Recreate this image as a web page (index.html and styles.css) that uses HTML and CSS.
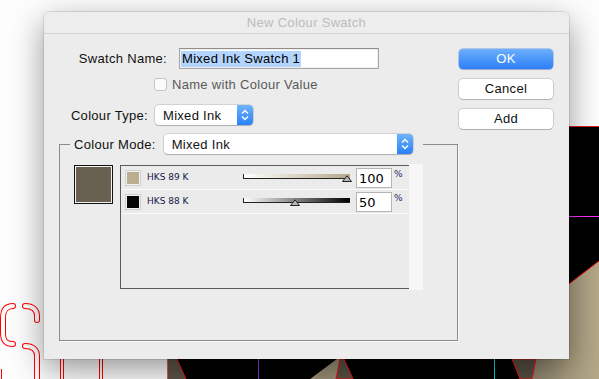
FILE: index.html
```html
<!DOCTYPE html>
<html>
<head>
<meta charset="utf-8">
<title>New Colour Swatch</title>
<link rel="stylesheet" href="styles.css">
</head>
<body>
<div class="desk">
  <svg class="canvas" width="599" height="379" viewBox="0 0 599 379">
    <rect x="0" y="0" width="599" height="379" fill="#fdfdfd"/>
    <rect x="167" y="126" width="432" height="253" fill="#000"/>
    <line x1="167" y1="126.5" x2="599" y2="126.5" stroke="#e02020" stroke-width="1"/>
    <line x1="560" y1="216.5" x2="599" y2="216.5" stroke="#ff30ff" stroke-width="1"/>
    <defs>
      <linearGradient id="tan" x1="0" y1="0" x2="1" y2="0">
        <stop offset="0" stop-color="#8e846f"/>
        <stop offset="0.5" stop-color="#a89d80"/>
        <stop offset="1" stop-color="#b4a889"/>
      </linearGradient>
    </defs>
    <polygon points="599,261 535,310 532,379 599,379" fill="url(#tan)"/>
    <polyline points="599,261 535,310" fill="none" stroke="#ff1010" stroke-width="1"/>
    <polygon points="512,359 536,359 532,379 520,379" fill="#574e42" stroke="#ff1010" stroke-width="1"/>
    <polygon points="167,359 177,359 186,379 167,379" fill="#5d5446"/>
    <line x1="177" y1="359" x2="186" y2="379" stroke="#ff1010" stroke-width="1"/>
    <line x1="167.5" y1="359" x2="167.5" y2="379" stroke="#d86060" stroke-width="1"/>
    <line x1="258.5" y1="359" x2="258.5" y2="379" stroke="#9030e0" stroke-width="1"/>
    <polygon points="310,379 337,359 340,359 336,379" fill="#9c9177"/>
    <polygon points="340,359 344,359 353,379 336,379" fill="#5a5144" stroke="#ff1010" stroke-width="1"/>
    <line x1="494.5" y1="359" x2="494.5" y2="379" stroke="#00e0e0" stroke-width="1"/>
    <g fill="none" stroke-linecap="round">
      <path d="M13 306 C6 306 3 310 3 318 L3 333 C3 341 6 344 13 344" stroke="#ff0000" stroke-width="6"/>
      <path d="M13 306 C6 306 3 310 3 318 L3 333 C3 341 6 344 13 344" stroke="#fdfdfd" stroke-width="4"/>
      <path d="M25 306 C33 306 37 310 37 316 L37 320" stroke="#ff0000" stroke-width="6"/>
      <path d="M25 306 C33 306 37 310 37 316 L37 320" stroke="#fdfdfd" stroke-width="4"/>
      <path d="M25 346 C33 346 37 350 37 356 L37 385" stroke="#ff0000" stroke-width="6"/>
      <path d="M25 346 C33 346 37 350 37 356 L37 385" stroke="#fdfdfd" stroke-width="4"/>
    </g>
    <g stroke="#ff0000" stroke-width="1">
      <line x1="1.5" y1="369" x2="1.5" y2="379"/>
      <line x1="60.5" y1="355" x2="60.5" y2="379"/>
      <line x1="63.5" y1="355" x2="63.5" y2="379"/>
      <line x1="99.5" y1="355" x2="99.5" y2="379"/>
      <line x1="102.5" y1="355" x2="102.5" y2="379"/>
    </g>
  </svg>

  <div class="dialog">
    <div class="titlebar">New Colour Swatch</div>
    <div class="content">
      <div class="top">
        <div class="form">
          <div class="row name-row">
            <label class="lbl lbl-name">Swatch Name:</label>
            <div class="text-input"><span class="sel">Mixed Ink Swatch 1</span></div>
          </div>
          <div class="row check-row">
            <span class="checkbox"></span>
            <span class="disabled">Name with Colour Value</span>
          </div>
          <div class="row type-row">
            <label class="lbl lbl-type">Colour Type:</label>
            <div class="popup popup-type">
              <span class="popup-text">Mixed Ink</span>
              <span class="arrows"><svg width="16" height="20" viewBox="0 0 16 20"><path d="M5 8.5 L8 5.5 L11 8.5 M5 11.5 L8 14.5 L11 11.5" fill="none" stroke="#fff" stroke-width="1.4"/></svg></span>
            </div>
          </div>
        </div>
        <div class="buttons">
          <div class="btn btn-default">OK</div>
          <div class="btn">Cancel</div>
          <div class="btn">Add</div>
        </div>
      </div>

      <fieldset class="group">
        <legend class="legend">
          <span class="lbl">Colour Mode:</span>
          <div class="popup popup-mode">
            <span class="popup-text">Mixed Ink</span>
            <span class="arrows"><svg width="16" height="20" viewBox="0 0 16 20"><path d="M5 8.5 L8 5.5 L11 8.5 M5 11.5 L8 14.5 L11 11.5" fill="none" stroke="#fff" stroke-width="1.4"/></svg></span>
          </div>
        </legend>
        <div class="group-body">
          <div class="preview"><div class="preview-fill"></div></div>
          <div class="list">
            <div class="ink-row">
              <span class="swatch" style="background:#b9ae90"></span>
              <span class="ink-name">HKS 89 K</span>
              <div class="slider">
                <div class="track track-tan"></div>
                <svg class="thumb" style="left:97%" width="10" height="7" viewBox="0 0 10 7"><path d="M0.5 6.5 L5 0.8 L9.5 6.5 Z" fill="#b8b8b8" stroke="#222" stroke-width="1"/></svg>
              </div>
              <div class="pct-input">100</div>
              <span class="pct">%</span>
            </div>
            <div class="ink-row">
              <span class="swatch" style="background:#050505"></span>
              <span class="ink-name">HKS 88 K</span>
              <div class="slider">
                <div class="track track-black"></div>
                <svg class="thumb" style="left:49%" width="10" height="7" viewBox="0 0 10 7"><path d="M0.5 6.5 L5 0.8 L9.5 6.5 Z" fill="#b8b8b8" stroke="#222" stroke-width="1"/></svg>
              </div>
              <div class="pct-input">50</div>
              <span class="pct">%</span>
            </div>
          </div>
          <div class="strip"></div>
        </div>
      </fieldset>
    </div>
  </div>
</div>
</body>
</html>
```

FILE: styles.css
```css
* { box-sizing: border-box; }

html, body {
  margin: 0;
  padding: 0;
  width: 599px;
  height: 379px;
  overflow: hidden;
  background: #fdfdfd;
}

body {
  font-family: "Liberation Sans", Arial, sans-serif;
  font-size: 13px;
  letter-spacing: 0.3px;
  color: #111;
}

.desk {
  position: relative;
  width: 599px;
  height: 379px;
  overflow: hidden;
}

.canvas {
  position: absolute;
  left: 0;
  top: 0;
}

.dialog {
  position: absolute;
  left: 44px;
  top: 12px;
  width: 525px;
  height: 347px;
  background: #ececec;
  border-radius: 5px 5px 0 0;
  box-shadow: 0 10px 32px rgba(0, 0, 0, 0.42), 0 0 0 0.5px rgba(0, 0, 0, 0.2);
}

.titlebar {
  height: 22px;
  border-bottom: 1px solid #d2d2d2;
  text-align: center;
  line-height: 21px;
  color: #bcbcbc;
  background: #ededed;
  border-radius: 5px 5px 0 0;
}

.top {
  display: flex;
  height: 100px;
}

.form {
  flex: 0 0 415px;
  padding-top: 14px;
  display: flex;
  flex-direction: column;
}

.row {
  display: flex;
  align-items: center;
}

.lbl {
  color: #111;
  white-space: nowrap;
}

.name-row { height: 21px; }
.lbl-name { width: 123px; text-align: right; margin-right: 12px; }

.text-input {
  width: 200px;
  height: 21px;
  background: #fff;
  border: 1px solid #a6a6a6;
  border-top-color: #8e8e8e;
  padding: 2px 0 0 1px;
  box-shadow: inset 0 0 0 1px #f0f0f0;
}

.sel {
  display: inline-block;
  background: #b3d4fd;
  line-height: 16px;
  padding: 0 1px;
  color: #000;
}

.check-row {
  height: 13px;
  margin-top: 9px;
  padding-left: 110px;
}

.checkbox {
  width: 13px;
  height: 13px;
  border: 1px solid #c4c4c4;
  border-radius: 3px;
  background: #fbfbfb;
  margin-right: 5px;
}

.disabled { color: #5a5a5a; }

.type-row {
  height: 20px;
  margin-top: 14px;
}
.lbl-type { width: 104px; text-align: right; margin-right: 7px; }

.popup {
  height: 20px;
  display: flex;
  align-items: center;
  background: #fff;
  border-radius: 4px;
  box-shadow: 0 0 0 0.5px rgba(0, 0, 0, 0.22), 0 1px 1px rgba(0, 0, 0, 0.18);
}

.popup-type { width: 98px; }
.popup-mode { width: 249px; }

.popup-text {
  flex: 1;
  padding-left: 8px;
  color: #111;
}

.arrows {
  width: 16px;
  height: 20px;
  border-radius: 0 4px 4px 0;
  background: linear-gradient(#6db4fb, #2a80f7);
  display: flex;
}

.buttons {
  width: 94px;
  padding-top: 15px;
  display: flex;
  flex-direction: column;
  gap: 10px;
}

.btn {
  height: 20px;
  line-height: 20px;
  text-align: center;
  background: #fff;
  border-radius: 4px;
  box-shadow: 0 0 0 0.5px rgba(0, 0, 0, 0.25), 0 1px 1px rgba(0, 0, 0, 0.15);
  color: #111;
}

.btn-default {
  background: linear-gradient(#6caffd, #2d7ff8);
  color: #fff;
  box-shadow: 0 0 0 0.5px rgba(20, 80, 200, 0.5), 0 1px 1px rgba(0, 0, 0, 0.15);
}

.group {
  margin: 0 0 0 15px;
  padding: 0;
  width: 399px;
  height: 207px;
  border: 1px solid #8b8b8b;
  box-shadow: 1px 1px 0 #fafafa;
  min-width: 0;
}

.legend {
  display: flex;
  align-items: center;
  margin-left: 10px;
  padding: 0 10px 0 4px;
  height: 20px;
}

.legend .lbl { margin-right: 8px; }

.group-body {
  display: flex;
  padding: 11px 0 0 14px;
}

.preview {
  width: 39px;
  height: 39px;
  border: 1px solid #111;
  padding: 1px;
  background: #f4f4f4;
  margin-right: 7px;
}

.preview-fill {
  width: 100%;
  height: 100%;
  background: #686151;
}

.list {
  width: 289px;
  height: 124px;
  border-top: 1px solid #5a5a5a;
  border-left: 1px solid #5a5a5a;
  border-bottom: 1px solid #5a5a5a;
  background: #ebebeb;
}

.strip {
  width: 14px;
  height: 126px;
  margin-top: -1px;
  background: #f7f7f7;
}

.ink-row {
  height: 24px;
  border-bottom: 1px solid #fafafa;
  display: flex;
  align-items: center;
  padding-left: 4px;
}

.swatch {
  width: 16px;
  height: 16px;
  border: 1px solid #d0d0d0;
  box-shadow: inset 0 0 0 1px #f2f2f2;
  margin-right: 6px;
}

.ink-name {
  width: 96px;
  font-family: "DejaVu Sans", Verdana, sans-serif;
  font-size: 9px;
  letter-spacing: 0;
  color: #15154a;
  margin-top: -2px;
}

.slider {
  position: relative;
  width: 107px;
  height: 5px;
  margin-top: -3px;
}

.track {
  width: 100%;
  height: 5px;
  border-left: 1px solid #222;
  border-bottom: 1px solid #222;
}

.track-tan { background: linear-gradient(to right, #ffffff, #b4a98b); }
.track-black { background: linear-gradient(to right, #ffffff, #000000); }

.thumb {
  position: absolute;
  bottom: -3px;
  margin-left: -5px;
}

.pct-input {
  width: 36px;
  height: 20px;
  margin-left: 6px;
  background: #fff;
  border: 1px solid #b5b5b5;
  font-family: "DejaVu Sans", Verdana, sans-serif;
  font-size: 13px;
  letter-spacing: 0;
  line-height: 19px;
  padding-left: 2px;
  color: #000;
}

.pct {
  align-self: flex-start;
  margin: 3px 0 0 2px;
  font-family: "DejaVu Sans", Verdana, sans-serif;
  font-size: 9px;
  letter-spacing: 0;
  color: #2a2a6a;
}
```
